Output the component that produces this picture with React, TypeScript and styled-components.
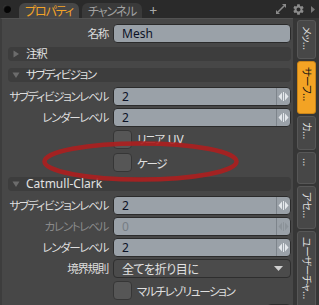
import React from "react";
import styled, { createGlobalStyle, css } from "styled-components";
import { MdSettings } from "react-icons/md";

const FONT = `"Noto Sans", "Noto Sans CJK JP", sans-serif`;

const jpText = css`
  font-size: 11.5px;
  letter-spacing: -1.3px;
  font-feature-settings: "palt";
`;

const GlobalStyle = createGlobalStyle`
  html, body {
    margin: 0;
    padding: 0;
    background: #2b2b2b;
    overflow: hidden;
  }
  body {
    font-family: ${FONT};
    font-size: 12px;
  }
`;

const Frame = styled.div`
  position: relative;
  width: 319px;
  height: 305px;
  display: grid;
  grid-template-rows: 18px 1fr;
  background: #2b2b2b;
  overflow: hidden;
`;

const TopBar = styled.div`
  display: flex;
  align-items: flex-end;
  padding-left: 3px;
  background: #2a2a2a;
`;

const Knob = styled.div`
  width: 8px;
  height: 8px;
  margin: 0 8px 5px 0;
  border-radius: 50%;
  background: radial-gradient(circle at 60% 60%, #050505 45%, #3a3a3a 75%);
`;

const Tab = styled.div<{ $active?: boolean }>`
  height: 15px;
  display: flex;
  align-items: center;
  padding: 0 6px;
  margin-right: 3px;
  border-radius: 6px 6px 0 0;
  background: ${(p) => (p.$active ? "#474747" : "#3a3a3a")};
  color: ${(p) => (p.$active ? "#f3a327" : "#a0a0a0")};
  ${jpText};
  font-size: 12px;
  letter-spacing: -1.1px;
`;

const Plus = styled.div`
  color: #a8a8a8;
  font-size: 14px;
  line-height: 15px;
  margin-left: 4px;
`;

const Spacer = styled.div`
  flex: 1;
`;

const TopIcons = styled.div`
  display: flex;
  align-items: center;
  gap: 5px;
  height: 18px;
  padding-right: 3px;
  color: #8c8c8c;
`;

const Body = styled.div`
  display: flex;
  min-height: 0;
`;

const Panel = styled.div`
  position: relative;
  width: 293px;
  display: flex;
  flex-direction: column;
  padding: 4px 2px 0 6px;
  box-sizing: border-box;
  background: #474747;
  border-left: 2px solid #3d3d3d;
  border-top: 1px solid #525252;
`;

const Row = styled.div<{ $h?: number }>`
  height: ${(p) => p.$h ?? 21}px;
  flex: none;
  display: grid;
  grid-template-columns: 100px 178px;
  column-gap: 5px;
  align-items: start;
`;

const Label = styled.div<{ $dim?: boolean }>`
  margin-top: 1px;
  height: 19px;
  line-height: 19px;
  text-align: right;
  white-space: nowrap;
  color: ${(p) => (p.$dim ? "#8a8a8a" : "#dedede")};
  ${jpText};
`;

const Field = styled.div<{ $dim?: boolean }>`
  margin-top: 1px;
  height: 19px;
  box-sizing: border-box;
  display: flex;
  align-items: center;
  border: 1px solid #2b2b2b;
  border-radius: 4px;
  background: #9aa1a8;
  color: ${(p) => (p.$dim ? "#767d84" : "#0c1226")};
  overflow: hidden;
`;

const Value = styled.span`
  flex: 1;
  padding-left: 8px;
  font-size: 12px;
`;

const Spinner = styled.div`
  width: 13px;
  height: 100%;
  display: flex;
  align-items: center;
  justify-content: center;
  border-left: 1px solid #7d848b;
`;

const Dropdown = styled.div`
  margin-top: 1px;
  height: 19px;
  box-sizing: border-box;
  display: flex;
  align-items: center;
  justify-content: space-between;
  padding: 0 7px 0 8px;
  border: 1px solid #2e2e2e;
  border-radius: 4px;
  background: #4b4b4b;
  color: #e2e2e2;
  ${jpText};
  font-size: 12px;
  letter-spacing: -0.4px;
`;

const CheckWrap = styled.div`
  margin-top: 2px;
  display: flex;
  align-items: center;
  gap: 5px;
  color: #e0e0e0;
  white-space: nowrap;
  ${jpText};
`;

const Latin = styled.span`
  font-size: 12px;
  letter-spacing: 0;
  margin-left: 4px;
`;

const Box = styled.div`
  width: 19px;
  height: 19px;
  box-sizing: border-box;
  border: 1px solid #363636;
  border-radius: 4px;
  background: #565656;
`;

const GroupSlot = styled.div`
  height: 21px;
  flex: none;
`;

const Band = styled.div<{ $latin?: boolean }>`
  margin-top: 3px;
  height: 14px;
  display: flex;
  align-items: center;
  gap: 6px;
  padding-left: 4px;
  border-radius: 4px;
  background: #3d3d3d;
  color: #e2e2e2;
  line-height: 14px;
  ${jpText};
  ${(p) =>
    p.$latin &&
    css`
      font-size: 12px;
      letter-spacing: 0;
    `}
`;

const SmallBox = styled.div`
  grid-column: 2;
  justify-self: end;
  margin-top: 2px;
  width: 22px;
  height: 19px;
  border: 1px solid #2e2e2e;
  border-radius: 4px;
  background: #4b4b4b;
`;

const Strip = styled.div`
  width: 26px;
  display: flex;
  flex-direction: column;
  gap: 2px;
  padding: 2px 3px 0 4px;
  box-sizing: border-box;
  background: #363636;
`;

const VTab = styled.div<{ $h: number; $active?: boolean }>`
  height: ${(p) => p.$h}px;
  flex: none;
  box-sizing: border-box;
  border: 1px solid ${(p) => (p.$active ? "#c98419" : "#575757")};
  border-radius: 3px;
  background: ${(p) => (p.$active ? "#f3a324" : "#474747")};
  color: ${(p) => (p.$active ? "#141414" : "#dcdcdc")};
  writing-mode: vertical-rl;
  text-orientation: sideways;
  font-size: 10.5px;
  letter-spacing: -0.8px;
  font-feature-settings: "palt";
  line-height: 17px;
  padding-top: 5px;
  white-space: nowrap;
  overflow: hidden;
`;

const Mark = styled.svg`
  position: absolute;
  left: 34px;
  top: 102px;
  pointer-events: none;
`;

function Arrows({ dim }: { dim?: boolean }) {
  const c = dim ? "#8c9399" : "#e4e8ec";
  return (
    <svg width="11" height="9" viewBox="0 0 11 9">
      <path d="M4 0.5 L0.5 4.5 L4 8.5 Z" fill={c} />
      <path d="M7 0.5 L10.5 4.5 L7 8.5 Z" fill={c} />
      <rect x="5" y="0" width="1" height="9" fill={c} />
    </svg>
  );
}

function Tri({ open }: { open?: boolean }) {
  return (
    <svg width="8" height="8" viewBox="0 0 8 8">
      {open ? (
        <path d="M0.5 1.5 L7.5 1.5 L4 7 Z" fill="#6c6c6c" />
      ) : (
        <path d="M1.5 0.5 L7 4 L1.5 7.5 Z" fill="#6c6c6c" />
      )}
    </svg>
  );
}

function NumberRow({ label, value, dim }: { label: string; value: string; dim?: boolean }) {
  return (
    <Row>
      <Label $dim={dim}>{label}</Label>
      <Field $dim={dim}>
        <Value>{value}</Value>
        <Spinner>
          <Arrows dim={dim} />
        </Spinner>
      </Field>
    </Row>
  );
}

function CheckRow({ label }: { label: React.ReactNode }) {
  return (
    <Row $h={23}>
      <span />
      <CheckWrap>
        <Box />
        <span>{label}</span>
      </CheckWrap>
    </Row>
  );
}

function Group({ title, open, latin }: { title: string; open?: boolean; latin?: boolean }) {
  return (
    <GroupSlot>
      <Band $latin={latin}>
        <Tri open={open} />
        <span>{title}</span>
      </Band>
    </GroupSlot>
  );
}

export default function App() {
  return (
    <>
      <GlobalStyle />
      <Frame>
        <TopBar>
          <Knob />
          <Tab $active>プロパティ</Tab>
          <Tab>チャンネル</Tab>
          <Plus>+</Plus>
          <Spacer />
          <TopIcons>
            <svg width="12" height="12" viewBox="0 0 12 12">
              <path d="M7 1 H11 V5 Z" fill="#8a8a8a" />
              <path d="M1 7 V11 H5 Z" fill="#8a8a8a" />
              <path d="M3 9 L9 3" stroke="#8a8a8a" strokeWidth="1.6" />
            </svg>
            <MdSettings size={13} />
            <svg width="6" height="9" viewBox="0 0 6 9">
              <path d="M1 1 L5 4.5 L1 8 Z" fill="#777" />
            </svg>
          </TopIcons>
        </TopBar>
        <Body>
          <Panel>
            <Row>
              <Label>名称</Label>
              <Field>
                <Value>Mesh</Value>
              </Field>
            </Row>
            <Group title="注釈" />
            <Group title="サブディビジョン" open />
            <NumberRow label="サブディビジョンレベル" value="2" />
            <NumberRow label="レンダーレベル" value="2" />
            <CheckRow
              label={
                <>
                  リニア<Latin>UV</Latin>
                </>
              }
            />
            <CheckRow label="ケージ" />
            <Group title="Catmull-Clark" open latin />
            <NumberRow label="サブディビジョンレベル" value="2" />
            <NumberRow label="カレントレベル" value="0" dim />
            <NumberRow label="レンダーレベル" value="2" />
            <Row>
              <Label>境界規則</Label>
              <Dropdown>
                <span>全てを折り目に</span>
                <svg width="9" height="5" viewBox="0 0 9 5">
                  <path d="M0 0 H9 L4.5 5 Z" fill="#d0d0d0" />
                </svg>
              </Dropdown>
            </Row>
            <CheckRow label="マルチレゾリューション" />
            <Row>
              <SmallBox />
            </Row>
            <Mark width="210" height="70" viewBox="0 0 210 70">
              <ellipse cx="104.5" cy="40.5" rx="96" ry="18" fill="none" stroke="#ab1f1f" strokeOpacity="0.92" strokeWidth="4.5" />
            </Mark>
          </Panel>
          <Strip>
            <VTab $h={39}>メッ…</VTab>
            <VTab $h={53} $active>サーフ…</VTab>
            <VTab $h={34}>カ…</VTab>
            <VTab $h={32}>…</VTab>
            <VTab $h={43}>アセ…</VTab>
            <VTab $h={80}>ユーザーチャ…</VTab>
          </Strip>
        </Body>
      </Frame>
    </>
  );
}
